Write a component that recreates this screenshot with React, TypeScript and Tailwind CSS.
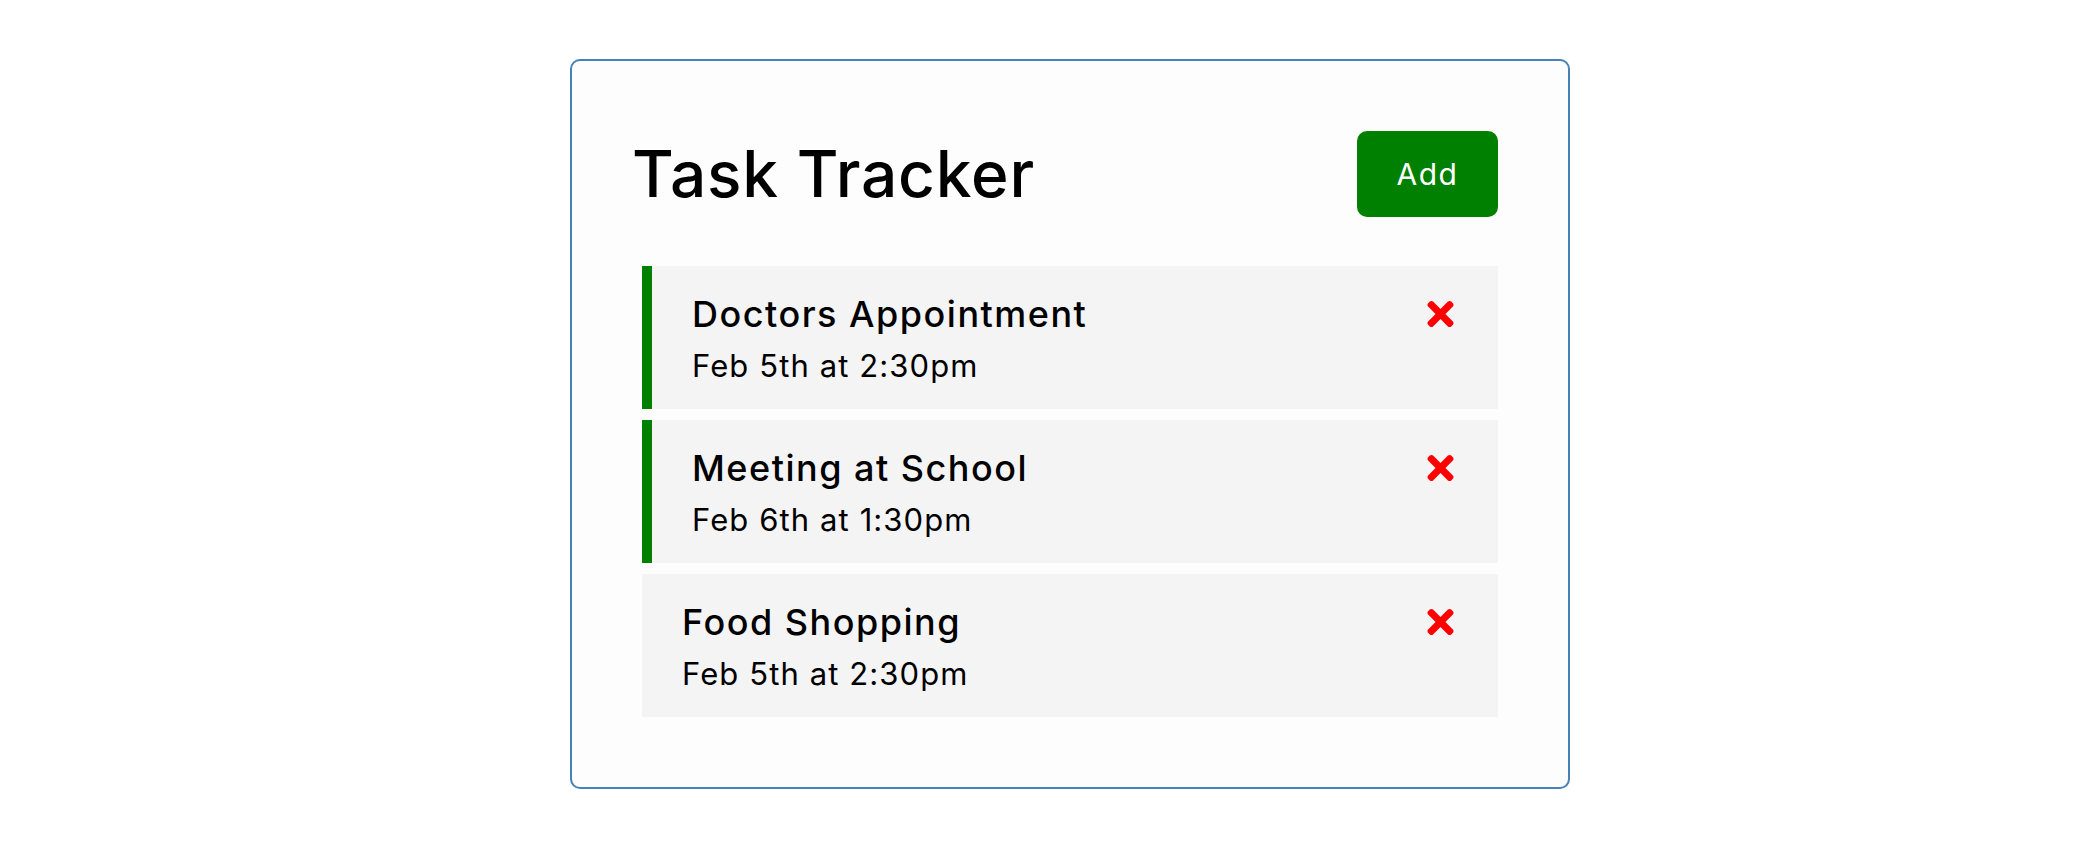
import React from 'react';
import { FaTimes } from 'react-icons/fa';

type Task = {
  id: number;
  text: string;
  day: string;
  reminder: boolean;
};

const tasks: Task[] = [
  { id: 1, text: 'Doctors Appointment', day: 'Feb 5th at 2:30pm', reminder: true },
  { id: 2, text: 'Meeting at School', day: 'Feb 6th at 1:30pm', reminder: true },
  { id: 3, text: 'Food Shopping', day: 'Feb 5th at 2:30pm', reminder: false },
];

const TaskItem: React.FC<{ task: Task }> = ({ task }) => (
  <div
    className={`bg-[#f4f4f5] pr-[40px] py-[20px] h-[143px] ${
      task.reminder ? 'border-l-[10px] border-[#008000] pl-[40px]' : 'pl-[40px]'
    }`}
  >
    <h3 className="flex items-center justify-between h-[56px] text-[36px] leading-[56px] tracking-[1.5px] font-medium text-black">
      {task.text}
      <FaTimes className="text-[#ff0000] w-[27px] h-[38px] cursor-pointer mr-[4px]" />
    </h3>
    <p className="text-[31px] leading-[47px] tracking-[1.1px] text-black">{task.day}</p>
  </div>
);

const App: React.FC = () => {
  return (
    <div className="min-h-screen bg-white font-['Inter','Noto_Sans',sans-serif]">
      <div className="w-[1000px] ml-[570px] pt-[59px]">
        <div className="border-2 border-[#4682b4] rounded-[10px] p-[60px] bg-[#fdfdfd]">
          <header className="flex items-center justify-between h-[106px]">
            <h1 className="text-[64px] leading-[96px] tracking-[0.8px] font-medium text-black">Task Tracker</h1>
            <button className="w-[141px] h-[86px] mr-[10px] bg-[#008000] text-white text-[30px] tracking-[1.5px] rounded-[10px]">
              Add
            </button>
          </header>
          <div className="flex flex-col gap-[11px] mx-[10px] mt-[39px] mb-[10px]">
            {tasks.map((t) => (
              <TaskItem key={t.id} task={t} />
            ))}
          </div>
        </div>
      </div>
    </div>
  );
};

export default App;
